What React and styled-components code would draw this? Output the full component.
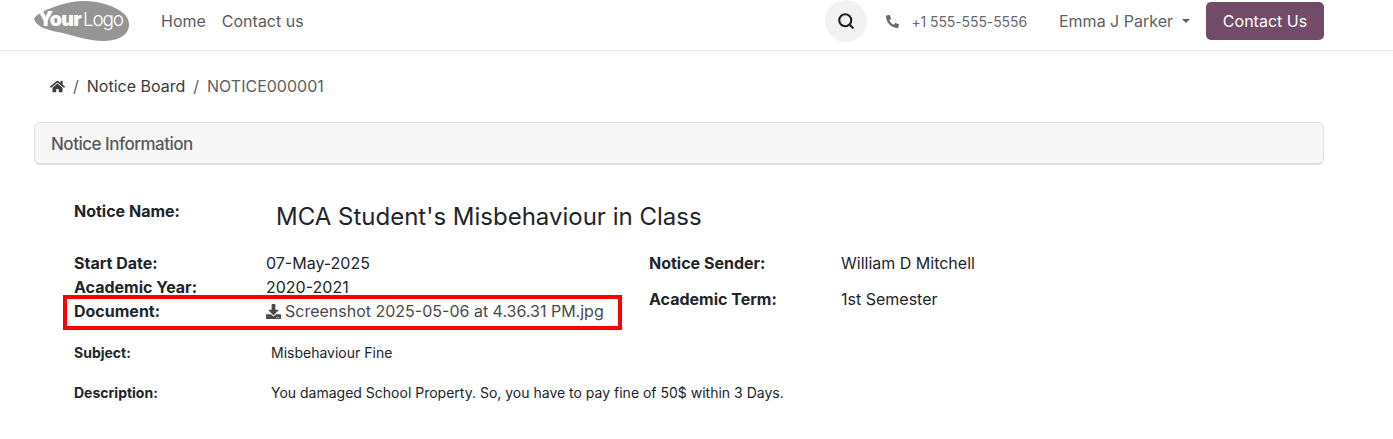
import React from "react";
import styled, { createGlobalStyle } from "styled-components";
import { FaHome, FaPhone, FaDownload } from "react-icons/fa";
import { Search } from "lucide-react";

const GlobalStyle = createGlobalStyle`
  html, body {
    margin: 0;
    padding: 0;
    background: #ffffff;
    font-family: Inter, "Noto Sans", sans-serif;
    color: #212529;
  }
`;

function Logo() {
  return (
    <svg width="98" height="42" viewBox="0 0 98 42">
      <path
        d="M1 19 C3 14 14 9 27 5 C42 0 58 0 72 4 C88 9 97 16 96 26 C95 36 84 41 70 41 C55 41 40 35 25 32 C13 30 3 26 1 19 Z"
        fill="#959595"
      />
      <path d="M2 13 L9 11 L11 7 L6 7 Z" fill="#ffffff" />
      <text x="5" y="26" fontFamily="Inter, sans-serif" fontSize="19.5" fontWeight="900" letterSpacing="-0.7" fill="#ffffff">
        Your
      </text>
      <text x="50" y="26" fontFamily="Inter, sans-serif" fontSize="19" fontWeight="300" letterSpacing="-1.2" fill="#ffffff">
        Logo
      </text>
    </svg>
  );
}

export default function App() {
  return (
    <>
      <GlobalStyle />
      <Navbar>
        <LogoSlot>
          <Logo />
        </LogoSlot>
        <NavLink>Home</NavLink>
        <NavLink>Contact us</NavLink>
        <Spacer />
        <SearchButton>
          <Search size={18} strokeWidth={2.8} />
        </SearchButton>
        <Phone>
          <FaPhone size={13} style={{ transform: "scaleX(-1)" }} />
          <span>+1 555-555-5556</span>
        </Phone>
        <UserMenu>
          Emma J Parker
          <Caret />
        </UserMenu>
        <ContactButton>Contact Us</ContactButton>
      </Navbar>

      <Page>
        <Breadcrumb>
          <FaHome size={15} color="#3d3d3d" />
          <Slash>/</Slash>
          <Crumb>Notice Board</Crumb>
          <Slash>/</Slash>
          <Crumb $muted>NOTICE000001</Crumb>
        </Breadcrumb>

        <CardHeader>Notice Information</CardHeader>

        <Sheet>
          <NameRow>
            <Label>Notice Name:</Label>
            <Title>MCA Student's Misbehaviour in Class</Title>
          </NameRow>

          <Columns>
            <Column>
              <Field>
                <Label>Start Date:</Label>
                <Value>07-May-2025</Value>
              </Field>
              <Field>
                <Label>Academic Year:</Label>
                <Value>2020-2021</Value>
              </Field>
              <Field $marked>
                <Label>Document:</Label>
                <DocLink>
                  <FaDownload size={15} />
                  Screenshot 2025-05-06 at 4.36.31 PM.jpg
                </DocLink>
              </Field>
            </Column>
            <RightColumn>
              <Field>
                <Label>Notice Sender:</Label>
                <Value>William D Mitchell</Value>
              </Field>
              <Field>
                <Label>Academic Term:</Label>
                <Value>1st Semester</Value>
              </Field>
            </RightColumn>
          </Columns>

          <SmallField $first>
            <SmallLabel>Subject:</SmallLabel>
            <SmallValue>Misbehaviour Fine</SmallValue>
          </SmallField>
          <SmallField>
            <SmallLabel>Description:</SmallLabel>
            <SmallValue>You damaged School Property. So, you have to pay fine of 50$ within 3 Days.</SmallValue>
          </SmallField>
        </Sheet>
      </Page>
    </>
  );
}

const Navbar = styled.header`
  display: flex;
  align-items: center;
  box-sizing: border-box;
  height: 51px;
  padding: 0 69px 8px 33px;
  background: #fff;
  border-bottom: 1px solid #ececec;
  box-shadow: 0 1px 2px rgba(0, 0, 0, 0.03);
  font-size: 16px;
  color: #5f5f5f;
`;

const LogoSlot = styled.div`
  display: flex;
  width: 98px;
  height: 42px;
  margin-right: 30px;
`;

const NavLink = styled.a`
  margin-right: 16px;
  color: #5b5b5b;
`;

const Spacer = styled.div`
  flex: 1;
`;

const SearchButton = styled.div`
  display: flex;
  align-items: center;
  justify-content: center;
  width: 42px;
  height: 42px;
  border-radius: 50%;
  background: #f2f2f2;
  color: #1f1f1f;
  margin-right: 19px;
`;

const Phone = styled.div`
  display: flex;
  align-items: center;
  gap: 12px;
  font-size: 14px;
  letter-spacing: -0.1px;
  color: #6b6b6b;
  margin-right: 32px;
`;

const UserMenu = styled.div`
  display: flex;
  align-items: center;
  gap: 9px;
  color: #5f5f5f;
  margin-right: 16px;
`;

const Caret = styled.span`
  width: 0;
  height: 0;
  border-left: 4px solid transparent;
  border-right: 4px solid transparent;
  border-top: 4px solid #5f5f5f;
`;

const ContactButton = styled.button`
  width: 118px;
  height: 38px;
  padding: 0;
  border: 0;
  border-radius: 5px;
  background: #714b67;
  color: #fff;
  font: inherit;
`;

const Page = styled.main`
  padding: 0 69px 0 34px;
`;

const Breadcrumb = styled.nav`
  display: flex;
  align-items: center;
  height: 24px;
  margin-top: 23px;
  padding-left: 16px;
  font-size: 16px;
`;

const Slash = styled.span`
  margin: 0 8px;
  color: #5f5f5f;
`;

const Crumb = styled.span`
  color: ${(p) => (p.$muted ? "#5f5f5f" : "#3a3a3a")};
`;

const CardHeader = styled.div`
  display: flex;
  align-items: center;
  box-sizing: border-box;
  height: 43px;
  margin-top: 24px;
  padding: 2px 0 0 16px;
  background: #f7f7f7;
  border: 1px solid #e2e2e2;
  border-bottom: 2px solid #dedede;
  border-radius: 6px;
  font-size: 17px;
  font-weight: 500;
  letter-spacing: -0.5px;
  color: #5a5a5a;
`;

const Sheet = styled.section`
  padding: 0 0 0 40px;
`;

const NameRow = styled.div`
  display: grid;
  grid-template-columns: 202px 1fr;
  height: 50px;
  margin-top: 36px;
`;

const Label = styled.div`
  font-size: 16px;
  font-weight: 700;
  color: #212529;
`;

const Title = styled.h1`
  margin: 2px 0 0;
  font-size: 24px;
  font-weight: 400;
  line-height: 28px;
  color: #212529;
`;

const Columns = styled.div`
  display: grid;
  grid-template-columns: 575px 1fr;
`;

const Column = styled.div`
  display: flex;
  flex-direction: column;
`;

const RightColumn = styled(Column)`
  gap: 12px;
`;

const Field = styled.div`
  position: relative;
  display: grid;
  grid-template-columns: 192px 1fr;
  align-items: center;
  height: 24px;

  ${(p) =>
    p.$marked &&
    `
    &::after {
      content: "";
      position: absolute;
      left: -11px;
      top: -4px;
      width: 559px;
      height: 35px;
      box-sizing: border-box;
      border: 4px solid #ff0000;
    }
  `}
`;

const Value = styled.div`
  font-size: 16px;
  color: #212529;
`;

const DocLink = styled.a`
  display: flex;
  align-items: center;
  gap: 4px;
  font-size: 16px;
  color: #4a4a4a;
`;

const SmallField = styled.div`
  display: grid;
  grid-template-columns: 197px 1fr;
  align-items: center;
  height: 20px;
  margin-top: ${(p) => (p.$first ? "19px" : "20px")};
`;

const SmallLabel = styled.div`
  font-size: 14px;
  font-weight: 700;
  color: #212529;
`;

const SmallValue = styled.div`
  font-size: 14px;
  color: #212529;
`;
